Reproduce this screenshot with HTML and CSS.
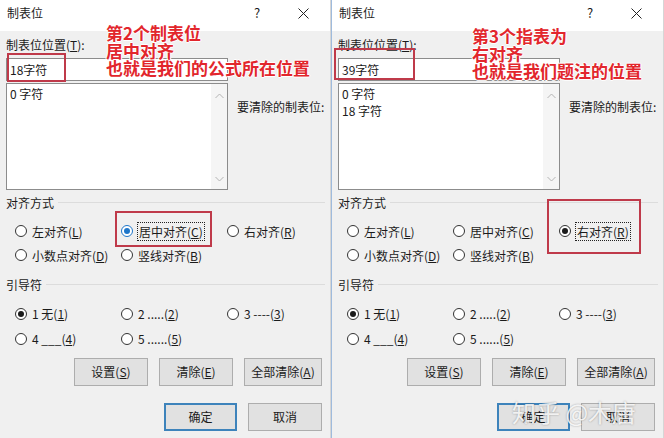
FILE: index.html
```html
<!DOCTYPE html>
<html>
<head>
	<title>制表位</title>
	<link rel="stylesheet" href="styles.css">
</head>
<body>
	<div class="screen">
		<!-- left dialog: centered tab -->
		<div class="dialog dialog-left">
			<div class="titlebar">
				<span class="title">制表位</span>
				<span class="help">?</span>
				<span class="close"><svg width="11" height="11" viewBox="0 0 11 11"><path d="M0.5 0.5L10.5 10.5M10.5 0.5L0.5 10.5" stroke="#222" stroke-width="1"/></svg></span>
			</div>
			<div class="body">
				<div class="tab-row">
					<div class="tab-col">
						<div class="label">制表位位置(<u>T</u>):</div>
						<div class="input">18字符</div>
						<div class="list">
							<div class="list-items">
								<div>0 字符</div>
							</div>
							<div class="scrollbar">
								<svg width="9" height="6" viewBox="0 0 9 6"><path d="M0.5 5L4.5 1L8.5 5" fill="none" stroke="#b4b4b4"/></svg>
								<svg width="9" height="6" viewBox="0 0 9 6"><path d="M0.5 1L4.5 5L8.5 1" fill="none" stroke="#b4b4b4"/></svg>
							</div>
						</div>
					</div>
					<div class="clear-label">要清除的制表位:</div>
				</div>

				<div class="group-title"><span>对齐方式</span><i class="rule"></i></div>
				<div class="options align-options">
					<div class="opt"><span class="radio"></span><span>左对齐(<u>L</u>)</span></div>
					<div class="opt"><span class="radio checked hover"></span><span class="focus">居中对齐(<u>C</u>)</span></div>
					<div class="opt"><span class="radio"></span><span>右对齐(<u>R</u>)</span></div>
					<div class="opt"><span class="radio"></span><span>小数点对齐(<u>D</u>)</span></div>
					<div class="opt"><span class="radio"></span><span>竖线对齐(<u>B</u>)</span></div>
				</div>

				<div class="group-title leader-title"><span>引导符</span><i class="rule"></i></div>
				<div class="options leader-options">
					<div class="opt"><span class="radio checked"></span><span>1 无(<u>1</u>)</span></div>
					<div class="opt"><span class="radio"></span><span>2 .....(<u>2</u>)</span></div>
					<div class="opt"><span class="radio"></span><span>3 ----(<u>3</u>)</span></div>
					<div class="opt"><span class="radio"></span><span>4 ___(<u>4</u>)</span></div>
					<div class="opt"><span class="radio"></span><span>5 ......(<u>5</u>)</span></div>
				</div>

				<div class="buttons buttons-top">
					<div class="btn">设置(<u>S</u>)</div>
					<div class="btn">清除(<u>E</u>)</div>
					<div class="btn btn-wide">全部清除(<u>A</u>)</div>
				</div>
				<div class="buttons buttons-bottom">
					<div class="btn btn-default">确定</div>
					<div class="btn">取消</div>
				</div>
			</div>

			<div class="note note-left">
				<div>第2个制表位</div>
				<div>居中对齐</div>
				<div>也就是我们的公式所在位置</div>
			</div>
			<div class="mark mark-input-left"></div>
			<div class="mark mark-radio-left"></div>
		</div>

		<!-- right dialog: right aligned tab -->
		<div class="dialog dialog-right">
			<div class="titlebar">
				<span class="title">制表位</span>
				<span class="help">?</span>
				<span class="close"><svg width="11" height="11" viewBox="0 0 11 11"><path d="M0.5 0.5L10.5 10.5M10.5 0.5L0.5 10.5" stroke="#222" stroke-width="1"/></svg></span>
			</div>
			<div class="body">
				<div class="tab-row">
					<div class="tab-col">
						<div class="label">制表位位置(<u>T</u>):</div>
						<div class="input">39字符</div>
						<div class="list">
							<div class="list-items">
								<div>0 字符</div>
								<div>18 字符</div>
							</div>
							<div class="scrollbar">
								<svg width="9" height="6" viewBox="0 0 9 6"><path d="M0.5 5L4.5 1L8.5 5" fill="none" stroke="#b4b4b4"/></svg>
								<svg width="9" height="6" viewBox="0 0 9 6"><path d="M0.5 1L4.5 5L8.5 1" fill="none" stroke="#b4b4b4"/></svg>
							</div>
						</div>
					</div>
					<div class="clear-label">要清除的制表位:</div>
				</div>

				<div class="group-title"><span>对齐方式</span><i class="rule"></i></div>
				<div class="options align-options">
					<div class="opt"><span class="radio"></span><span>左对齐(<u>L</u>)</span></div>
					<div class="opt"><span class="radio"></span><span>居中对齐(<u>C</u>)</span></div>
					<div class="opt"><span class="radio checked"></span><span class="focus">右对齐(<u>R</u>)</span></div>
					<div class="opt"><span class="radio"></span><span>小数点对齐(<u>D</u>)</span></div>
					<div class="opt"><span class="radio"></span><span>竖线对齐(<u>B</u>)</span></div>
				</div>

				<div class="group-title leader-title"><span>引导符</span><i class="rule"></i></div>
				<div class="options leader-options">
					<div class="opt"><span class="radio checked"></span><span>1 无(<u>1</u>)</span></div>
					<div class="opt"><span class="radio"></span><span>2 .....(<u>2</u>)</span></div>
					<div class="opt"><span class="radio"></span><span>3 ----(<u>3</u>)</span></div>
					<div class="opt"><span class="radio"></span><span>4 ___(<u>4</u>)</span></div>
					<div class="opt"><span class="radio"></span><span>5 ......(<u>5</u>)</span></div>
				</div>

				<div class="buttons buttons-top">
					<div class="btn">设置(<u>S</u>)</div>
					<div class="btn">清除(<u>E</u>)</div>
					<div class="btn btn-wide">全部清除(<u>A</u>)</div>
				</div>
				<div class="buttons buttons-bottom">
					<div class="btn btn-default">确定</div>
					<div class="btn">取消</div>
				</div>
			</div>

			<div class="note note-right">
				<div>第3个指表为</div>
				<div>右对齐</div>
				<div>也就是我们题注的位置</div>
			</div>
			<div class="mark mark-input-right"></div>
			<div class="mark mark-radio-right"></div>
			<div class="watermark">知乎 @木唐</div>
		</div>
	</div>
</body>
</html>
```

FILE: styles.css
```css
* {
	box-sizing: border-box;
}

body {
	margin: 0;
	background-color: #fff;
	font-family: "Noto Sans CJK SC", sans-serif;
	font-size: 12px;
	color: #1b1b1b;
}

.screen {
	display: flex;
	width: 664px;
	height: 438px;
	overflow: hidden;
}

.dialog {
	position: relative;
	height: 438px;
	background-color: #f0f0f0;
	display: flex;
	flex-direction: column;
}

.dialog-left {
	width: 331px;
	border-right: 1px solid #d6d6d6;
}

.dialog-right {
	width: 333px;
	border-left: 1px solid #9fbbdd;
	border-right: 1px solid #d6d6d6;
}

.titlebar {
	height: 31px;
	background-color: #fff;
	display: flex;
	align-items: flex-start;
	padding: 5px 4px 0 7px;
	line-height: 16px;
}

.title {
	flex: 1;
}

.help {
	width: 46px;
	text-align: center;
	font-size: 13px;
}

.close {
	width: 46px;
	display: flex;
	justify-content: center;
	padding-top: 3px;
}

.body {
	padding: 6px 0 0 6px;
}

.tab-row {
	display: flex;
}

.tab-col {
	width: 222px;
}

.label {
	line-height: 16px;
}

.input {
	margin-top: 5px;
	height: 23px;
	border: 1px solid #8c8c8c;
	background-color: #fff;
	padding-left: 3px;
	line-height: 21px;
}

.list {
	margin-top: 2px;
	height: 107px;
	border: 1px solid #8c8c8c;
	background-color: #fff;
	display: flex;
}

.list-items {
	flex: 1;
	padding: 1px 0 0 3px;
	line-height: 17px;
}

.scrollbar {
	width: 16px;
	background-color: #f5f5f5;
	display: flex;
	flex-direction: column;
	justify-content: space-between;
	align-items: center;
	padding: 9px 0 7px;
}

.clear-label {
	padding: 62px 0 0 9px;
	line-height: 16px;
}

.group-title {
	margin-top: 5px;
	display: flex;
	align-items: center;
	line-height: 16px;
}

.leader-title {
	margin-top: 10px;
}

.rule {
	flex: 1;
	height: 1px;
	margin: -1px 5px 0 4px;
	background-color: #dcdcdc;
}

.options {
	margin-top: 8px;
	padding-left: 9px;
	display: grid;
	grid-template-columns: 106px 106px 106px;
}

.align-options {
	grid-auto-rows: 24px;
}

.leader-options {
	grid-auto-rows: 25px;
}

.opt {
	display: flex;
	align-items: center;
	gap: 5px;
	white-space: nowrap;
}

.radio {
	position: relative;
	width: 12px;
	height: 12px;
	border: 1px solid #333;
	border-radius: 50%;
	background-color: #fff;
}

.radio.checked::after {
	content: "";
	position: absolute;
	left: 2px;
	top: 2px;
	width: 6px;
	height: 6px;
	border-radius: 50%;
	background-color: #1b1b1b;
}

.radio.hover {
	border-color: #1f76c9;
}

.radio.hover::after {
	background-color: #1f76c9;
}

.focus {
	outline: 1px dotted #222;
	padding: 0 1px;
}

.buttons {
	display: flex;
	justify-content: flex-end;
	gap: 11px;
	padding-right: 8px;
}

.buttons-top {
	margin-top: 7px;
}

.buttons-bottom {
	margin-top: 17px;
}

.btn {
	width: 74px;
	height: 28px;
	background-color: #e1e1e1;
	border: 1px solid #adadad;
	text-align: center;
	line-height: 26px;
}

.btn-wide {
	width: 78px;
}

.btn-default {
	width: 73px;
	border: 2px solid #3d83bb;
	line-height: 24px;
}

.note {
	position: absolute;
	font-size: 17px;
	font-weight: 700;
	color: #e2262c;
	white-space: nowrap;
	text-shadow: 1px 0 0 #fff, -1px 0 0 #fff, 0 1px 0 #fff, 0 -1px 0 #fff;
}

.note div {
	height: 17.5px;
	line-height: 17.5px;
}

.note-left {
	left: 106px;
	top: 24px;
}

.note-right {
	left: 140px;
	top: 27px;
}

.mark {
	position: absolute;
	border: 2px solid #bf3a4a;
}

.mark-input-left {
	left: 7px;
	top: 53px;
	width: 59px;
	height: 29px;
}

.mark-radio-left {
	left: 115px;
	top: 211px;
	width: 97px;
	height: 36px;
}

.mark-input-right {
	left: 2px;
	top: 48px;
	width: 81px;
	height: 32px;
}

.mark-radio-right {
	left: 215px;
	top: 199px;
	width: 94px;
	height: 55px;
}

.watermark {
	position: absolute;
	left: 180px;
	top: 398px;
	font-size: 24px;
	line-height: 28px;
	color: rgba(255, 255, 255, 0.85);
	text-shadow: 0 0 2px rgba(0, 0, 0, 0.35);
	white-space: nowrap;
}
```
